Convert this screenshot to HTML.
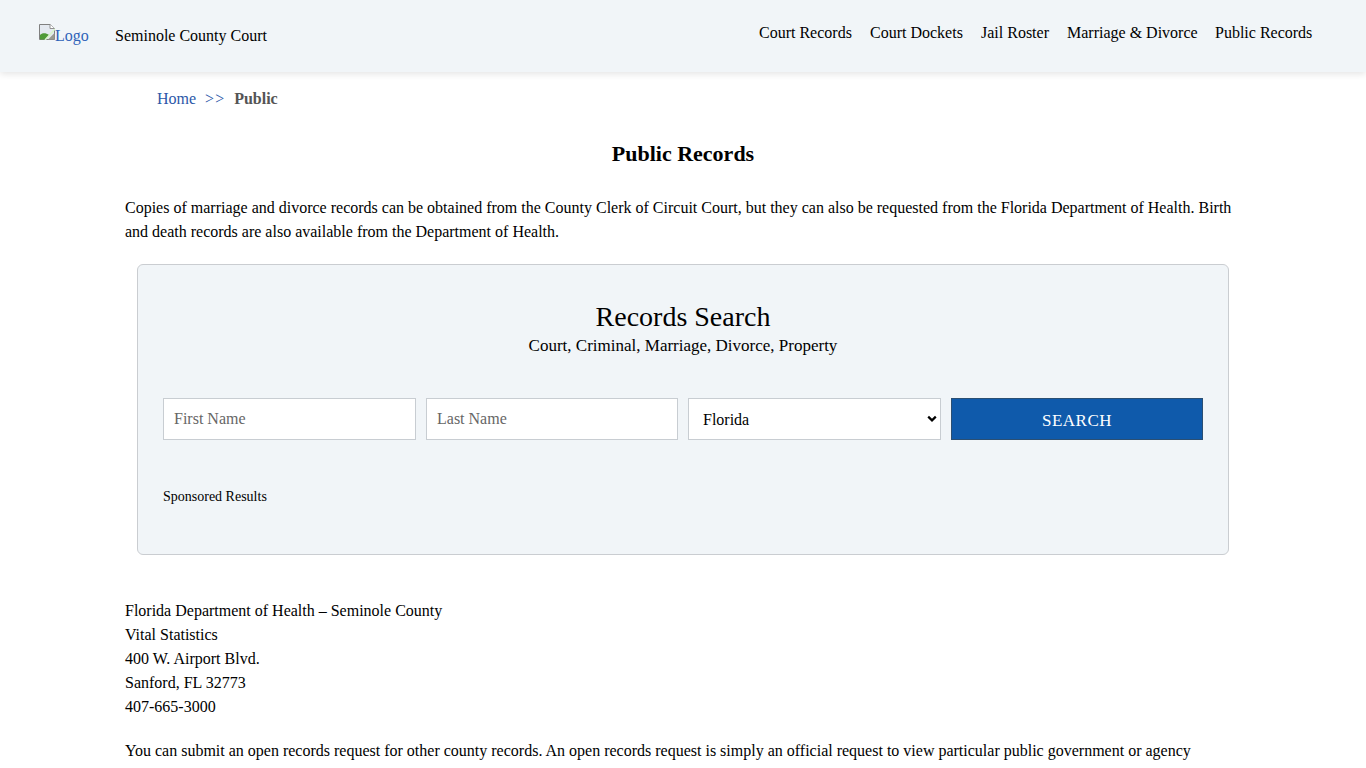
<!DOCTYPE html>
<html>
<head>
<meta charset="utf-8">
<style>
*{box-sizing:border-box;}
html,body{margin:0;padding:0;}
body{font-family:"Liberation Serif",serif;font-size:16px;color:#000;background:#fff;width:1366px;height:768px;overflow:hidden;position:relative;}
a{color:#2b57a8;text-decoration:none;}
.header{position:absolute;left:0;top:0;width:1366px;height:72px;background:#f1f5f8;box-shadow:0 2px 7px rgba(0,0,0,0.11);}
.logo{position:absolute;left:39px;top:27px;height:20px;font-size:16px;color:#2f62b8;white-space:nowrap;}
.logo .ic{display:inline-block;width:16px;height:16px;vertical-align:top;position:relative;top:-3px;}
.site{position:absolute;left:115px;top:27px;font-size:16px;white-space:nowrap;}
.nav{position:absolute;top:24px;font-size:16px;white-space:nowrap;color:#000;}
.crumb{position:absolute;left:157px;top:90px;font-size:16px;white-space:nowrap;}
.crumb .sep{color:#2b57a8;margin:0 9px 0 9px;letter-spacing:1px;}
.crumb b{color:#555;}
h1{position:absolute;left:0;width:1366px;top:141px;margin:0;text-align:center;font-size:22px;font-weight:bold;}
.p{position:absolute;left:125px;width:1116px;font-size:16px;line-height:24px;}
.box{position:absolute;left:137px;top:264px;width:1092px;height:291px;background:#f1f5f8;border:1px solid #cacdd1;border-radius:6px;}
.rs{position:absolute;left:0;width:1090px;text-align:center;top:36px;font-size:28px;}
.sub{position:absolute;left:0;width:1090px;text-align:center;top:71px;font-size:17px;}
.inp{position:absolute;top:133px;height:42px;background:#fff;border:1px solid #c8cdd2;font-size:16px;color:#666;padding-left:10px;line-height:40px;}
.btn{position:absolute;top:133px;height:42px;background:#0f5aab;border:1px solid #2b4f73;color:#fff;text-align:center;line-height:44px;font-size:17px;letter-spacing:0.5px;}
.spons{position:absolute;left:25px;top:224px;font-size:14px;}
</style>
</head>
<body>
<div class="header">
  <div class="logo"><span class="ic"><svg width="16" height="16" viewBox="0 0 16 16"><path d="M0.5 0.5H11L15.5 4.5V15.5H0.5Z" fill="#e4e9f0" stroke="#808080" stroke-width="1"/><path d="M11 0.5V4.5H15.5" fill="#fff" stroke="#909090" stroke-width="1"/><path d="M1 15.5V11C3 8.5 7 8.5 10 11L6 15.5Z" fill="#4f9a38"/><path d="M6 16L16 5" stroke="#d8f5c8" stroke-width="1.5"/><path d="M9 15.5L15.5 9V15.5Z" fill="#9a9a90"/></svg></span>Logo</div>
  <div class="site">Seminole County Court</div>
  <div class="nav" style="left:759px">Court Records</div>
  <div class="nav" style="left:870px">Court Dockets</div>
  <div class="nav" style="left:981px">Jail Roster</div>
  <div class="nav" style="left:1067px">Marriage &amp; Divorce</div>
  <div class="nav" style="left:1215px">Public Records</div>
</div>
<div class="crumb"><a href="#">Home</a><span class="sep">&gt;&gt;</span><b>Public</b></div>
<h1>Public Records</h1>
<div class="p" style="top:196px">Copies of marriage and divorce records can be obtained from the County Clerk of Circuit Court, but they can also be requested from the Florida Department of Health. Birth and death records are also available from the Department of Health.</div>
<div class="box">
  <div class="rs">Records Search</div>
  <div class="sub">Court, Criminal, Marriage, Divorce, Property</div>
  <div class="inp" style="left:25px;width:253px">First Name</div>
  <div class="inp" style="left:288px;width:252px">Last Name</div>
  <div class="inp" style="left:550px;width:253px;color:#000;padding-left:14px;line-height:42px">Florida<svg style="position:absolute;right:3px;top:16px" width="10" height="8" viewBox="0 0 10 8"><path d="M1.2 1.6L5 5.4L8.8 1.6" fill="none" stroke="#000" stroke-width="2.2"/></svg></div>
  <div class="btn" style="left:813px;width:252px">SEARCH</div>
  <div class="spons">Sponsored Results</div>
</div>
<div class="p" style="top:599px">Florida Department of Health – Seminole County<br>Vital Statistics<br>400 W. Airport Blvd.<br>Sanford, FL 32773<br>407-665-3000</div>
<div class="p" style="top:739px;white-space:nowrap">You can submit an open records request for other county records. An open records request is simply an official request to view particular public government or agency</div>
</body>
</html>
